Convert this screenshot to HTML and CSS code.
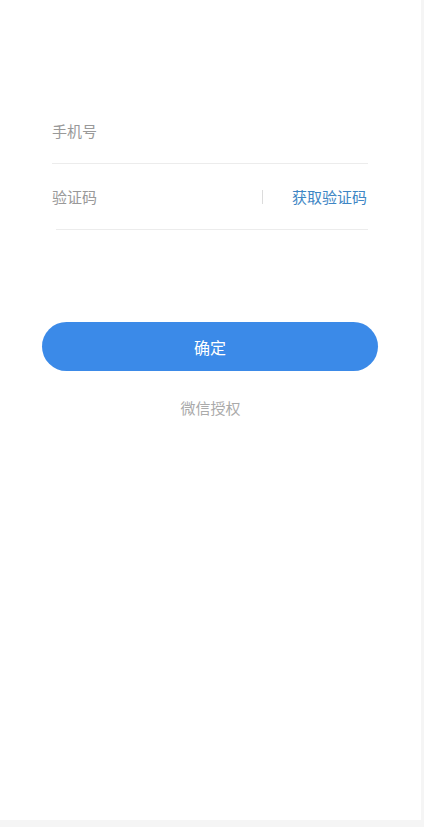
FILE: index.html
```html
<!DOCTYPE html>
<html lang="zh-CN">
<head>
	<meta charset="UTF-8">
	<title>登录</title>
	<link rel="stylesheet" href="styles.css">
</head>
<body>
	<div class="page">
		<div class="form">
			<div class="row">
				<span class="label">手机号</span>
			</div>
			<div class="row row-code">
				<span class="label">验证码</span>
				<span class="sep"></span>
				<span class="get-code">获取验证码</span>
			</div>
		</div>
		<div class="btn">确定</div>
		<div class="wx">微信授权</div>
	</div>
</body>
</html>
```

FILE: styles.css
```css
html, body{
	margin: 0;
	padding: 0;
}
body{
	background: #f5f5f5;
	font-family: "Noto Sans CJK SC", "Noto Sans", sans-serif;
}
.page{
	width: 421px;
	height: 820px;
	background: #fff;
	padding-top: 98px;
	box-sizing: border-box;
}
.form{
	margin: 0 53px 0 52px;
}
.row{
	height: 65px;
	border-bottom: 1px solid #ececec;
	display: flex;
	align-items: center;
}
.row-code{
	margin-left: 4px;
}
.row-code .label{
	margin-left: -4px;
}
.label{
	font-size: 15px;
	color: #999;
	flex: 1;
}
.sep{
	width: 1px;
	height: 14px;
	background: #dcdcdc;
	margin-right: 29px;
}
.get-code{
	font-size: 15px;
	color: #3e86c4;
	margin-right: 1px;
}
.btn{
	margin: 92px 43px 0 42px;
	height: 49px;
	border-radius: 25px;
	background: #3b8ae8;
	color: #fff;
	font-size: 16px;
	display: flex;
	align-items: center;
	justify-content: center;
}
.wx{
	margin-top: 26px;
	text-align: center;
	font-size: 15px;
	color: #aaa;
	line-height: 21px;
}
```
